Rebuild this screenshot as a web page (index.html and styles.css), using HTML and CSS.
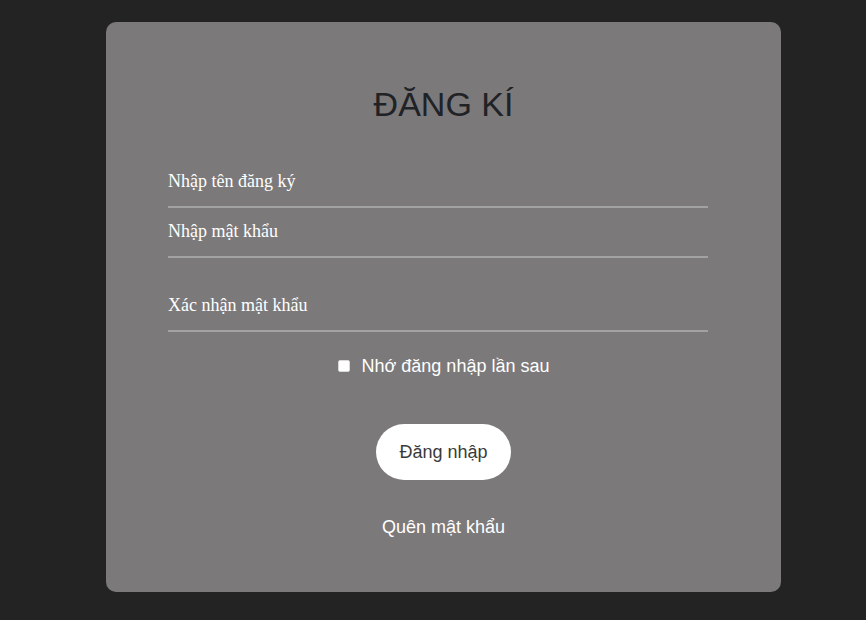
FILE: index.html
```html
<!DOCTYPE html>
<html lang="vi">
<head>
<meta charset="utf-8">
<title>Đăng kí</title>
<link rel="stylesheet" href="styles.css">
</head>
<body>
<form class="card">
  <h1 class="title">ĐĂNG KÍ</h1>
  <div class="fields">
    <input class="field" type="text" placeholder="Nhập tên đăng ký">
    <input class="field" type="password" placeholder="Nhập mật khẩu">
    <input class="field field-spaced" type="password" placeholder="Xác nhận mật khẩu">
  </div>
  <label class="remember">
    <input class="check" type="checkbox">
    <span>Nhớ đăng nhập lần sau</span>
  </label>
  <button class="submit" type="button">Đăng nhập</button>
  <a class="forgot" href="#">Quên mật khẩu</a>
</form>
</body>
</html>
```

FILE: styles.css
```css
html, body {
  margin: 0;
  padding: 0;
  background: #232323;
  height: 100%;
}

body {
  padding: 22px 0 0 106px;
  box-sizing: border-box;
  font-family: "Liberation Sans", Arial, sans-serif;
}

.card {
  width: 675px;
  height: 570px;
  box-sizing: border-box;
  background: #7b797a;
  border-radius: 10px;
  padding: 62px 0 0 0;
  display: flex;
  flex-direction: column;
  align-items: center;
}

.title {
  margin: 0;
  font-size: 34px;
  line-height: 40px;
  font-weight: 400;
  color: #202226;
}

.fields {
  align-self: flex-start;
  margin: 34px 0 0 62px;
  width: 540px;
  display: flex;
  flex-direction: column;
}

.field {
  height: 50px;
  box-sizing: border-box;
  width: 540px;
  border: none;
  border-bottom: 2px solid #a3a2a3;
  background: transparent;
  padding: 0 0 1px 0;
  outline: none;
  font-family: "Liberation Serif", "Times New Roman", serif;
  font-size: 18px;
  color: #fff;
}

.field::placeholder {
  color: #fff;
  opacity: 1;
}

.field-spaced {
  margin-top: 24px;
}

.remember {
  margin-top: 24px;
  height: 20px;
  display: flex;
  align-items: center;
  gap: 12px;
  color: #fff;
  font-size: 18px;
  line-height: 20px;
}

.check {
  appearance: none;
  -webkit-appearance: none;
  margin: 0;
  width: 12px;
  height: 12px;
  background: #fff;
  border-radius: 2px;
  border: 1px solid #d8d8d8;
}

.submit {
  margin-top: 48px;
  height: 56px;
  width: 135px;
  border: none;
  border-radius: 28px;
  background: #fff;
  color: #3a3a3a;
  font-family: "Liberation Sans", Arial, sans-serif;
  font-size: 18px;
  padding: 0;
}

.forgot {
  margin-top: 37px;
  color: #fff;
  text-decoration: none;
  font-size: 18px;
  line-height: 20px;
}
```
